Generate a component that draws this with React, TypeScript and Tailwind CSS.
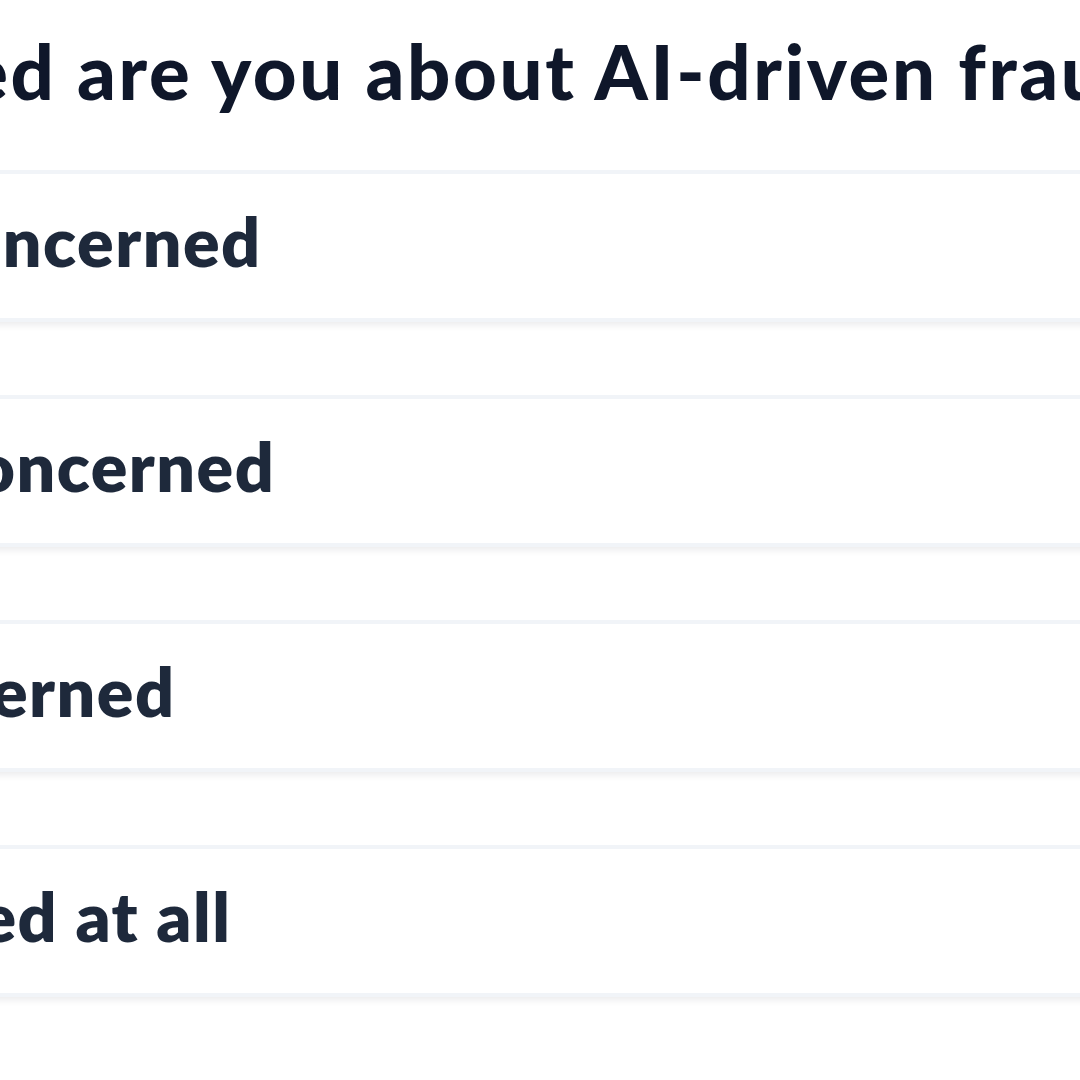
import React from "react";

const options = [
  "Extremely concerned",
  "Somewhat concerned",
  "Slightly concerned",
  "Not concerned at all",
];

export default function App() {
  return (
    <div className="w-[1080px] h-[1080px] overflow-hidden bg-white" style={{ fontFamily: "Lato, 'Open Sans', sans-serif" }}>
      <div className="ml-[-640px] w-[2400px] pl-[128px] pt-[33px]">
        <h1 className="text-[76px] leading-none font-black tracking-[2.6px] text-[#0f172a] whitespace-nowrap">
          How concerned are you about AI-driven fraud?
        </h1>
      </div>
      <div className="ml-[-640px] w-[2400px] mt-[61px] flex flex-col gap-[73px]">
        {options.map((o) => (
          <div
            key={o}
            className="h-[152px] bg-white border-y-4 border-[#f1f4f8] shadow-[0_5px_8px_-3px_rgba(15,23,42,0.10)] flex items-center pl-[226px] pb-[10px]"
          >
            <span className="text-[68px] leading-none font-extrabold tracking-[1.5px] text-[#1e293b] whitespace-nowrap">
              {o}
            </span>
          </div>
        ))}
      </div>
    </div>
  );
}
